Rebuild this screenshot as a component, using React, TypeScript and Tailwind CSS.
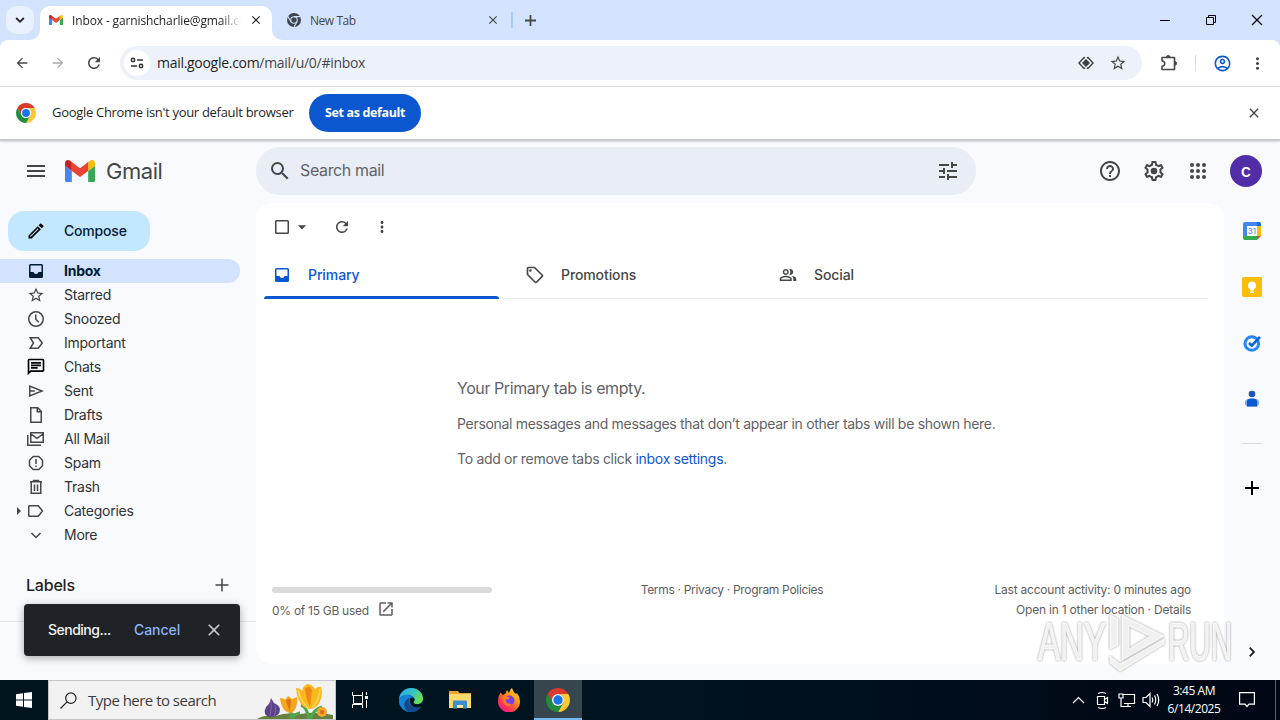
import type { ReactNode } from "react";
import {
  MdArrowBack,
  MdArrowForward,
  MdArrowDropDown,
  MdClose,
  MdHelpOutline,
  MdMoreVert,
  MdOpenInNew,
  MdOutlineAccountCircle,
  MdOutlineChat,
  MdOutlineLocalOffer,
  MdOutlineModeEdit,
  MdOutlinePeopleAlt,
  MdRefresh,
  MdSearch,
  MdStarBorder,
  MdTune,
} from "react-icons/md";

const GmailLogo = ({ className }: { className: string }) => (
  <svg viewBox="0 0 88 66" className={className}>
    <path fill="#4285f4" d="M6 66h14V32L0 17v43c0 3.3 2.7 6 6 6" />
    <path fill="#34a853" d="M68 66h14c3.3 0 6-2.7 6-6V17L68 32" />
    <path fill="#fbbc04" d="M68 6v26l20-15V9c0-7.4-8.5-11.7-14.4-7.2" />
    <path fill="#ea4335" d="M20 32V6l24 18L68 6v26L44 50" />
    <path fill="#c5221f" d="M0 9v8l20 15V6l-5.6-4.2C8.5-2.6 0 1.6 0 9" />
  </svg>
);

const ChromeLogo = ({ className }: { className: string }) => (
  <svg viewBox="0 0 24 24" className={className}>
    <path fill="#db3a2c" d="M12 6h10.39A12 12 0 0 0 1.61 6L6.8 15A6 6 0 0 1 12 6z" />
    <path fill="#fcc934" d="M22.39 6H12a6 6 0 0 1 5.2 9L12 24A12 12 0 0 0 22.39 6z" />
    <path fill="#1e8e3e" d="M1.61 6 6.8 15a6 6 0 0 0 10.4 0L12 24A12 12 0 0 1 1.61 6z" />
    <circle cx="12" cy="12" r="6" fill="#fff" />
    <circle cx="12" cy="12" r="4.7" fill="#1a73e8" />
  </svg>
);

const ChromeMono = () => (
  <svg viewBox="0 0 24 24" className="size-[14px]">
    <circle cx="12" cy="12" r="12" fill="#3c4451" />
    <circle cx="12" cy="12" r="5.6" fill="none" stroke="#d3e3fd" strokeWidth="1.8" />
    <path d="M12 6.2h11M6.8 15 1.5 5.8M17.2 15 12 24" stroke="#d3e3fd" strokeWidth="1.8" />
  </svg>
);

const Line = ({ children, w = 1.5, className = "size-5" }: { children: ReactNode; w?: number; className?: string }) => (
  <svg viewBox="0 0 20 20" fill="none" stroke="currentColor" strokeWidth={w} className={className}>
    {children}
  </svg>
);

const InboxIcon = () => (
  <svg viewBox="0 0 20 20" fill="currentColor" className="size-5">
    <path
      fillRule="evenodd"
      d="M4.5 3h11A1.5 1.5 0 0 1 17 4.5v11a1.5 1.5 0 0 1-1.5 1.5h-11A1.5 1.5 0 0 1 3 15.5v-11A1.5 1.5 0 0 1 4.5 3zm0 1.5V11h3q.6 2 2.500 2t2.500-2h3V4.500z"
    />
  </svg>
);

const folders = [
  { name: "Inbox", icon: <InboxIcon /> },
  { name: "Starred", icon: <MdStarBorder className="size-[18px]" /> },
  { name: "Snoozed", icon: <Line><circle cx="10" cy="10" r="7.250" /><path d="M9.750 5.500V10.300l3 3" /></Line> },
  { name: "Important", icon: <Line><path d="M4.250 4.750h8L16.250 10l-4 5.250h-8L7.500 10z" /></Line> },
  { name: "Chats", icon: <MdOutlineChat className="size-5 text-black" /> },
  { name: "Sent", icon: <Line><path d="M3.750 5v10L16 10zM3.750 10h5" /></Line> },
  { name: "Drafts", icon: <Line><path d="M4.750 2.750h7l3.500 3.500v11H4.750zM11.250 3v3.750H15" /></Line> },
  { name: "All Mail", icon: <Line><path d="M4.750 3.750h12.500v9.500H4.750zM5 5l6 4.250L17 5M1.750 6v10.250H15" /></Line> },
  { name: "Spam", icon: <Line><path d="M7.200 3.500h5.600l3.700 3.700v5.600l-3.700 3.700H7.200l-3.700-3.700V7.200zM10 6v5M10 12.500V14" /></Line> },
  { name: "Trash", icon: <Line><path d="M4 4.750h12M7.500 4V3.500h5V4M5.250 5v11.250h9.500V5M8.500 7.500v6.500M11.500 7.500v6.500" /></Line> },
  { name: "Categories", icon: <Line><path d="M3.500 4.750h8.750L16.500 10l-4.250 5.250H3.500q-.75 0-.75-.75v-9q0-.75.75-.75z" /></Line> },
  { name: "More", icon: <Line><path d="m5.500 8 4.500 4.500L14.500 8" /></Line> },
];

function TabStrip() {
  return (
    <div className="flex h-10 bg-[#d3e3fd] font-['Open_Sans',sans-serif] text-[12px] text-[#1f1f1f]">
      <div className="mt-[6px] ml-[6px] flex size-7 items-center justify-center rounded-[10px] bg-[#e9f1fe]">
        <svg viewBox="0 0 10 10" className="size-[10px]" fill="none" stroke="#1f1f1f" strokeWidth="1.800">
          <path d="m1.200 3 3.800 3.800L8.800 3" />
        </svg>
      </div>
      <div className="relative mt-[6px] ml-[6px] flex h-[34px] w-[232px] items-center rounded-t-[10px] bg-white pb-[6px] pl-[9px]">
        <svg viewBox="0 0 10 10" className="absolute bottom-0 -left-[10px] size-[10px]">
          <path d="M10 0v10H0A10 10 0 0 0 10 0" fill="#fff" />
        </svg>
        <svg viewBox="0 0 10 10" className="absolute -right-[10px] bottom-0 size-[10px]">
          <path d="M0 0v10h10A10 10 0 0 1 0 0" fill="#fff" />
        </svg>
        <GmailLogo className="w-[14px]" />
        <div className="ml-[9px] w-[169px] overflow-hidden pt-px whitespace-nowrap [mask-image:linear-gradient(90deg,#000_88%,transparent)] tracking-[-0.130px]">
          Inbox - garnishcharlie@gmail.com
        </div>
        <MdClose className="ml-[8px] size-[14px]" />
      </div>
      <div className="flex w-[241px] items-center pl-[15px] text-[#474747]">
        <ChromeMono />
        <span className="ml-[9px] flex-1 pt-px tracking-[-0.450px]">New Tab</span>
        <MdClose className="mr-[11px] size-[14px]" />
        <span className="h-4 w-[2px] rounded bg-[#a8c7fa]" />
      </div>
      <svg viewBox="0 0 10 10" className="mt-[15px] ml-[12px] size-[11px]" stroke="#474747" strokeWidth="1.600">
        <path d="M5 0v10M0 5h10" />
      </svg>
      <svg viewBox="0 0 110 12" className="mt-[14px] mr-[10px] ml-auto h-3 w-[110px]" fill="none" stroke="#000">
        <path d="M0 6.500h10M46.500 3.500h7v7h-7zM48.500 3.500v-2h7v7h-2" />
        <path d="m92 1 10 10M102 1 92 11" strokeWidth="1.200" />
      </svg>
    </div>
  );
}

function Toolbar() {
  return (
    <div className="bg-[#d3e3fd]">
      <div className="flex h-[47px] items-center rounded-t-[8px] border-b border-[#dfe1e5] bg-white font-['Open_Sans',sans-serif] text-[#474747]">
        <MdArrowBack className="ml-[14px] size-4" />
        <MdArrowForward className="ml-5 size-4 text-[#ababab]" />
        <MdRefresh className="ml-[19px] size-[18px]" />
        <div className="ml-[17px] flex h-[34px] w-[1022px] items-center rounded-full bg-[#edf1fa] pl-1">
          <span className="flex size-[26px] items-center justify-center rounded-full bg-white">
            <svg viewBox="0 0 14 12" className="h-3 w-[14px]" fill="none" stroke="#333" strokeWidth="1.500">
              <circle cx="3" cy="3" r="1.700" />
              <path d="M7 3h6M1 9h6" />
              <circle cx="11" cy="9" r="1.700" />
            </svg>
          </span>
          <span className="ml-[7px] flex-1 pb-px text-[14px] tracking-[-0.290px]">
            <span className="text-[#1f1f1f]">mail.google.com</span>/mail/u/0/#inbox
          </span>
          <svg viewBox="0 0 16 14" className="mr-[15px] h-[14px] w-4" fill="none" stroke="#3c4043" strokeWidth="1.400">
            <path d="M7 2 6 1.500 1 7l5 5.500L7 12M9 2l1-.5L15 7l-5 5.500L9 12" />
            <path d="M8 4 11 7 8 10 5 7z" fill="#3c4043" />
          </svg>
          <MdStarBorder className="mr-[15px] size-[18px]" />
        </div>
        <svg viewBox="0 0 18 18" className="ml-[18px] size-[18px]" fill="none" stroke="#474747" strokeWidth="1.600">
          <path d="M2 3.500h12.500V15.500H2v-3.200c2-.2 2.700-1.500 2.700-2.800S4 7 2 6.700z" strokeLinejoin="round" />
          <path d="M6.500 3.200a1.800 1.800 0 0 1 3.600 0zM14.800 7.600a1.800 1.800 0 0 1 0 3.600z" fill="#474747" strokeWidth="1" />
        </svg>
        <span className="ml-[17px] h-4 w-px bg-[#d3dbe8]" />
        <MdOutlineAccountCircle className="ml-[17px] size-[19px] text-[#0b57d0]" />
        <MdMoreVert className="ml-[16px] size-[19px]" />
      </div>
    </div>
  );
}

function InfoBar() {
  return (
    <div className="relative z-10 flex h-[54px] items-center border-b-2 border-[#c9cbcc] bg-white font-['Open_Sans',sans-serif] text-[13px] text-[#1f1f1f] shadow-[0_1px_2px_#0002]">
      <ChromeLogo className="ml-4 size-5" />
      <span className="ml-4 w-[257px] tracking-[-0.300px] whitespace-nowrap">Google Chrome isn't your default browser</span>
      <button className="h-[38px] w-[112px] rounded-full bg-[#0b57d0] pt-px text-[12.500px] font-bold tracking-[-0.350px] text-white">
        Set as default
      </button>
      <MdClose className="mr-[18px] ml-auto size-4 text-[#474747]" />
    </div>
  );
}

function Header() {
  return (
    <header className="mb-[2px] flex h-[60px] items-center text-[#444746]">
      <svg viewBox="0 0 18 12" className="ml-[27px] h-3 w-[18px]" stroke="currentColor" strokeWidth="2">
        <path d="M0 1h18M0 6h18M0 11h18" />
      </svg>
      <GmailLogo className="ml-5 w-[30px]" />
      <span className="ml-[11px] w-[150px] text-[22px] tracking-[-0.450px]">Gmail</span>
      <div className="flex h-12 w-[720px] items-center rounded-full bg-[#e9eef6] pr-4 pl-3">
        <MdSearch className="size-6" />
        <span className="ml-2 flex-1 pb-[2px] text-[16px] tracking-[-0.360px] text-[#5f6368]">Search mail</span>
        <MdTune className="size-6" />
      </div>
      <MdHelpOutline className="ml-[122px] size-6" />
      <svg viewBox="0 0 24 24" className="ml-5 size-6" fill="currentColor">
        <path d="M19.430 12.980c.04-.32.07-.64.07-.98 0-.34-.03-.66-.07-.98l2.110-1.650c.19-.15.24-.42.12-.64l-2-3.460a.5.5 0 0 0-.61-.22l-2.490 1c-.52-.4-1.080-.73-1.690-.98l-.38-2.650A.488.488 0 0 0 14 2h-4c-.25 0-.46.18-.49.42l-.38 2.650c-.61.25-1.170.59-1.690.98l-2.490-1a.566.566 0 0 0-.18-.03c-.17 0-.34.09-.43.25l-2 3.460c-.13.22-.07.49.12.64l2.110 1.650c-.04.32-.07.65-.07.98s.03.66.07.98l-2.110 1.650c-.19.15-.24.42-.12.64l2 3.460a.5.5 0 0 0 .61.22l2.490-1c.52.4 1.080.73 1.690.98l.38 2.650c.03.24.24.42.49.42h4c.25 0 .46-.18.49-.42l.38-2.650c.61-.25 1.170-.59 1.690-.98l2.490 1c.06.02.12.03.18.03.17 0 .34-.09.43-.25l2-3.460c.12-.22.07-.49-.12-.64l-2.110-1.650zm-1.980-1.710c.04.31.05.52.05.73 0 .21-.02.43-.05.73l-.14 1.130.89.7 1.080.84-.7 1.210-1.270-.51-1.040-.42-.9.68c-.43.32-.84.56-1.250.73l-1.060.43-.16 1.130-.2 1.350h-1.400l-.19-1.350-.16-1.130-1.060-.43c-.43-.18-.83-.41-1.230-.71l-.91-.7-1.060.43-1.270.51-.7-1.210 1.080-.84.89-.7-.14-1.130c-.03-.31-.05-.54-.05-.74s.02-.43.05-.73l.14-1.130-.89-.7-1.080-.84.7-1.210 1.270.51 1.040.42.9-.68c.43-.32.84-.56 1.250-.73l1.060-.43.16-1.130.2-1.350h1.390l.19 1.350.16 1.130 1.060.43c.43.18.83.41 1.230.71l.91.7 1.060-.43 1.270-.51.7 1.210-1.070.85-.89.7.14 1.130z" />
        <circle cx="12" cy="12" r="3.300" />
      </svg>
      <svg viewBox="0 0 24 24" className="ml-5 size-6" fill="currentColor">
        {[6, 12, 18].map((y) => [6, 12, 18].map((x) => <circle key={`${x}-${y}`} cx={x} cy={y} r="2" />))}
      </svg>
      <span className="ml-5 flex size-8 items-center justify-center rounded-full bg-[#512da8] pb-px text-[18px] leading-none font-medium text-white">
        c
      </span>
    </header>
  );
}

function Sidebar() {
  return (
    <aside className="relative w-64 text-[14px] text-[#303233]">
      <button className="mt-2 ml-2 flex h-10 w-[142px] items-center rounded-[16px] bg-[#c2e7ff] pl-[18px] font-medium text-[#001d35]">
        <MdOutlineModeEdit className="size-5 text-black" />
        <span className="ml-[18px] pb-[2px] tracking-[-0.180px]">Compose</span>
      </button>
      <nav className="mt-2 w-60">
        {folders.map(({ name, icon }) => (
          <div
            key={name}
            className={`flex h-6 items-center rounded-r-full ${name === "Inbox" ? "bg-[#d3e3fd] font-bold text-[#001d35]" : "text-[#444746]"}`}
          >
            <span className="flex w-[26px] justify-end">
              {name === "Categories" && (
                <svg viewBox="0 0 4 8" className="mr-[5px] h-2 w-1"><path d="M0 0l4 4-4 4z" fill="#444746" /></svg>
              )}
            </span>
            <span className="flex w-5 justify-center">{icon}</span>
            <span className={`ml-[18px] pb-[2px] tracking-[-0.250px] ${name === "Inbox" ? "" : "text-[#303233]"}`}>{name}</span>
          </div>
        ))}
      </nav>
      <div className="mt-[27px] flex h-[22px] items-center justify-between pr-[27px] pl-[26px] text-[16px] font-medium text-[#1f1f1f]">
        <span className="pb-px tracking-[-0.200px]">Labels</span>
        <svg viewBox="0 0 14 14" className="size-[14px]" stroke="#444746" strokeWidth="1.500">
          <path d="M7 .5v13M.5 7h13" />
        </svg>
      </div>
      <div className="mt-[25px] h-px bg-[#e3e7ec]" />
      <div className="absolute top-[401px] left-6 flex h-[52px] w-[216px] items-center rounded bg-[#1f2226] pl-6 font-medium text-[#f2f2f2] shadow-[0_2px_8px_#0005]">
        <span className="w-[86px] pb-[2px] tracking-[-0.500px]">Sending...</span>
        <span className="w-[70px] pb-[2px] tracking-[-0.050px] text-[#8ab4f8]">Cancel</span>
        <MdClose className="size-5 text-[#c4c7c5]" />
      </div>
    </aside>
  );
}

function Main() {
  return (
    <main className="flex h-[461px] w-[968px] flex-col rounded-2xl bg-white text-[#444746]">
      <div className="flex h-12 items-center pl-4">
        <Line>
          <rect x="3.750" y="3.750" width="12.500" height="12.500" rx=".8" />
        </Line>
        <MdArrowDropDown className="size-5" />
        <MdRefresh className="ml-[21px] size-[18px]" />
        <MdMoreVert className="ml-[22px] size-[18px]" />
      </div>
      <div className="mr-4 ml-2 flex h-[48px] border-b border-[#eceff1] text-[14px] font-medium tracking-[-0.100px]">
        <div className="relative flex w-[235px] items-center pl-2 text-[#0b57d0]">
          <InboxIcon />
          <span className="ml-4">Primary</span>
          <span className="absolute inset-x-0 -bottom-px h-[3px] rounded-t-[3px] bg-[#0b57d0]" />
        </div>
        <div className="flex w-[253px] items-center pl-[26px]">
          <MdOutlineLocalOffer className="size-5" />
          <span className="ml-4">Promotions</span>
        </div>
        <div className="flex items-center pl-[27px]">
          <MdOutlinePeopleAlt className="size-[18px]" />
          <span className="ml-[17px]">Social</span>
        </div>
      </div>
      <div className="mt-[77px] ml-[201px] text-[#5f6368]">
        <p className="text-[16px] leading-6 tracking-[-0.430px]">Your Primary tab is empty.</p>
        <p className="mt-[14px] text-[14px] leading-5 tracking-[-0.305px] whitespace-nowrap">
          Personal messages and messages that don’t appear in other tabs will be shown here.
        </p>
        <p className="mt-[15px] text-[14px] leading-5 tracking-[-0.300px]">
          To add or remove tabs click <span className="text-[#0b57d0]">inbox settings</span>.
        </p>
      </div>
      <footer className="mt-[111px] flex px-4 text-[12px] leading-5 text-[#5e5e5e]">
        <div className="w-[220px]">
          <div className="mt-[7px] h-[6px] rounded-[3px] bg-[#dadada]" />
          <div className="mt-2 flex items-center tracking-[-0.280px]">
            0% of 15 GB used
            <MdOpenInNew className="-mt-1 ml-2 size-[18px]" />
          </div>
        </div>
        <div className="w-[480px] text-center tracking-[-0.310px]">Terms · Privacy · Program Policies</div>
        <div className="w-[219px] text-right tracking-[-0.220px] whitespace-nowrap">
          Last account activity: 0 minutes ago
          <br />
          Open in 1 other location · Details
        </div>
      </footer>
    </main>
  );
}

function SidePanel() {
  return (
    <aside className="flex w-14 flex-col items-center">
      <svg viewBox="0 0 20 20" className="mt-[18px] size-5">
        <path d="M3 1h12v4H5v10H1V3q0-2 2-2" fill="#4285f4" />
        <path d="M15 1h2q2 0 2 2v2h-4z" fill="#1967d2" />
        <path d="M15 5h4v10h-4z" fill="#fbbc04" />
        <path d="M1 15h14v4H3q-2 0-2-2z" fill="#34a853" />
        <path d="M15 15h4l-4 4z" fill="#ea4335" />
        <path d="M5 5h10v10H5z" fill="#fff" />
        <text x="9.900" y="13" fontSize="8" textAnchor="middle" fill="#4285f4">31</text>
      </svg>
      <svg viewBox="0 0 20 20" className="mt-9 size-5">
        <rect width="20" height="20" rx="2" fill="#fbbc04" />
        <path d="M10 4.500a4 4 0 0 1 2 7.500v1.500H8V12a4 4 0 0 1 2-7.500M8 14.500h4V16H8z" fill="#fff" />
      </svg>
      <svg viewBox="0 0 20 20" className="mt-9 size-5" fill="none">
        <circle cx="9.800" cy="10.500" r="6.800" stroke="#2684fc" strokeWidth="3" />
        <path d="m7 10 2.700 2.700 8.300-8.700" stroke="#0b66da" strokeWidth="2.600" />
      </svg>
      <svg viewBox="0 0 20 20" className="mt-9 size-5">
        <rect x="3" y="10" width="14" height="7.500" rx="3.500" fill="#7baaf7" />
        <path d="M5 17.500V13q0-3.500 3.500-3.500h3Q15 9.500 15 13v4.500z" fill="#0b57d0" />
        <circle cx="10" cy="5" r="3.300" fill="#1a56bd" />
      </svg>
      <div className="mt-[34px] h-px w-5 bg-[#dadce0]" />
      <svg viewBox="0 0 14 14" className="mt-[37px] size-[14px]" stroke="#000" strokeWidth="2">
        <path d="M7 0v14M0 7h14" />
      </svg>
      <svg viewBox="0 0 6 10" className="mt-[152px] h-[10px] w-[6px]" fill="none" stroke="#1f1f1f" strokeWidth="1.800">
        <path d="m.7.700 4.300 4.300L.7 9.300" />
      </svg>
    </aside>
  );
}

function Flowers() {
  return (
    <svg viewBox="0 0 80 38" className="ml-auto h-[38px] w-20">
      <path d="M2 38q8-5 18-3 12-4 26-2 14-3 32 1v4z" fill="#66813f" />
      <path d="M36 38q1-8-3-13M37 38q4-6 8-6M54 38q-2-12-8-14M55 38q4-10 12-12" stroke="#4fa64b" strokeWidth="3" fill="none" />
      <path d="M16 17q-1 6-5 9-4 8 4 10 10 0 10-8-1-4-6-6z" fill="#5c4387" />
      <path d="M16 20q1 8-1 15M20 24q2 6-1 11" stroke="#8366ad" fill="none" />
      <path d="M25 17q4 0 5 2l3-4 4 3 5-2q1 13-6 16-9 0-11-15z" fill="#f6a51c" />
      <path d="M31 20q3-5 5 0l-1 11z" fill="#dd7413" />
      <path d="M41 7q4 0 6 3 1-6 6-7 5 1 7 5 3-3 6-2 2 7-1 14-3 8-10 8Q43 27 41 7z" fill="#fbb81f" />
      <path d="M50 8q4-5 7 1l-2 17q-4-8-5-18" fill="#ee8817" />
      <path d="M43 9q3 12 10 18M65 8q-1 12-8 19" stroke="#ffd75a" strokeWidth="1.500" fill="none" />
      <circle cx="67" cy="31" r="5" fill="#f3a72c" />
      <circle cx="67" cy="31" r="2" fill="#d9651c" />
    </svg>
  );
}

function Taskbar() {
  return (
    <div className="flex h-10 bg-linear-to-r from-[#00151e] via-[#001420] to-[#000714] font-['Open_Sans',sans-serif] text-[12px] text-white">
      <div className="flex w-12 items-center justify-center">
        <svg viewBox="0 0 16 16" className="size-4" fill="#fff">
          <path d="M0 2.300 7 1.300v6.200H0zM8 1.100 16 0v7.500H8zM0 8.500h7v6.200l-7-1zM8 8.500h8V16l-8-1.100z" />
        </svg>
      </div>
      <div className="flex w-72 items-center border border-[#c6c6c6] bg-[#f2f2f2] text-[15px] text-[#3b3b3b]">
        <svg viewBox="0 0 18 18" className="ml-[11px] size-[17px]" fill="none" stroke="#222" strokeWidth="1.300">
          <circle cx="11.500" cy="6.500" r="5.500" />
          <path d="m7.500 10.500-7 7" />
        </svg>
        <span className="ml-[11px] tracking-[-0.520px]">Type here to search</span>
        <Flowers />
      </div>
      <div className="flex w-12 items-center justify-center">
        <svg viewBox="0 0 16 16" className="size-4" fill="none" stroke="#fff">
          <path d="M.5 0v3.500h10V0M1.500 3.500v8h9v-8M.5 16v-3.500h10V16M14.500 0v3M14.500 8v8" />
          <path d="M13 4h3v3h-3z" fill="#fff" stroke="none" />
        </svg>
      </div>
      <div className="flex w-[54px] items-center justify-center">
        <svg viewBox="0 0 24 24" className="size-6">
          <defs>
            <linearGradient id="edgeTop" x1="0" y1="0" x2="1" y2=".5">
              <stop offset="0" stopColor="#2aa7e8" />
              <stop offset=".55" stopColor="#35c1c8" />
              <stop offset="1" stopColor="#6bdc55" />
            </linearGradient>
          </defs>
          <circle cx="12" cy="12" r="12" fill="#0c6fc4" />
          <path d="M0 11C1 4 6 0 12 0c7 0 12 5 12 10.500 0 3.500-2.500 5.700-5.500 5.700-2.500 0-4-1-4-2 0-.8 1-1 1-3C15.500 8.500 12 6.800 8.500 6.800 4 6.800 1 9 0 11" fill="url(#edgeTop)" />
          <path d="M8.500 7C4 7 0 10 0 13c0 6 5 11 12 11-5-1-7-5-6-9 .6-3 3-4.500 5.500-5.500A9 9 0 0 0 8.500 7" fill="#1583d6" />
          <path d="M10.500 10C8 14 12 20 18 19.500c2 0 3.500-.8 4.300-1.200C20 22 16 24 12 24c-5 0-8-5-6.500-9 .8-2.500 3-4.500 5-5" fill="#114a8b" />
          <path d="M14.500 14.200c0 1 1.500 2 4 2 2 0 4-1 5-3l.5 3-2 2.300c-1 .6-2.500 1-4 1-5 .3-8-4.500-7-8.500 1-1.500 3.500-1.800 4.500 0 .5 1.500-1 2.300-1 3.200" fill="#00151e" />
        </svg>
      </div>
      <div className="flex w-11 items-center justify-center">
        <svg viewBox="0 0 22 20" className="h-5 w-[22px]">
          <path d="M0 1h9l1.500 2H22v15H0z" fill="#e8a33d" />
          <path d="M0 4h22v14H0z" fill="#ffda6b" />
          <path d="M4 18.500v-7q0-1 1-1h12q1 0 1 1v7h-4V15H8v3.500z" fill="#3b8fd0" />
          <path d="M8 15h6v2H8z" fill="#fff0a8" />
        </svg>
      </div>
      <div className="flex w-[52px] items-center justify-center pl-[2px]">
        <svg viewBox="0 0 24 24" className="size-6">
          <defs>
            <linearGradient id="fox" x1="1" y1="0" x2=".2" y2="1">
              <stop offset="0" stopColor="#fff04d" />
              <stop offset=".4" stopColor="#ff980e" />
              <stop offset=".75" stopColor="#ff3750" />
              <stop offset="1" stopColor="#e31587" />
            </linearGradient>
          </defs>
          <path d="M3.500 4.500 6 7l3-2q0-2 1-3l2 3q1-4 3-5 1 4 4 6l1-1q3 4 3 8.500A11 11 0 1 1 1 13.500Q1 8 3.500 4.500" fill="url(#fox)" />
          <circle cx="12.500" cy="12.500" r="5" fill="#7542e5" />
          <path d="M5 9q5-2 8 1-2 2-4.500 1.500Q9 16 15 16q-4 4-8 0-2-3-2-7" fill="#ff7a2a" />
        </svg>
      </div>
      <div className="flex w-12 items-center justify-center border-b-2 border-[#76b9ed] bg-[#36454e] pt-[2px]">
        <ChromeLogo className="size-6" />
      </div>
      <svg viewBox="0 0 90 20" className="mt-[10px] ml-auto h-5 w-[90px]" fill="none" stroke="#fff" strokeWidth="1.200">
        <path d="m3 13 5.500-5.500L14 13" />
        <path d="M27.500 6.500h7v8h-7zM34.500 9.500l3-2v6l-3-2M28 3.500q4-2 8 0M28 17.500q4 2 8 0" />
        <path d="M52 4.500h12.500v9H54M49 4h4v4h-4zM51 8v8.500h10M58 13.500v3" />
        <path d="M73 7.500h3l4-4v13l-4-4h-3zM82 7.500q1.500 2.500 0 5M84.500 5.500q2.500 4.500 0 9M87 4q3.500 6 0 12" />
      </svg>
      <div className="w-[68px] pt-[2px] text-center leading-[18px] tracking-[-0.450px]">
        3:45 AM
        <br />
        6/14/2025
      </div>
      <svg viewBox="0 0 16 16" className="mt-[12px] ml-[11px] size-4" fill="none" stroke="#fff" strokeWidth="1.200">
        <path d="M.6.600h14.800v11.500H10L8 14.500l-2-2.400H.6z" />
      </svg>
      <div className="mr-1 ml-[20px] w-px bg-[#5d646d]" />
    </div>
  );
}

const Watermark = () => (
  <svg
    viewBox="0 0 200 62"
    className="pointer-events-none absolute top-[611px] left-[1036px] h-[62px] w-[200px] overflow-visible font-['Liberation_Sans',sans-serif] [filter:drop-shadow(0_0_1px_#0007)]"
    fill="#fff"
    fillOpacity=".85"
    stroke="#fff"
    strokeOpacity=".8"
  >
    <text x="2" y="49" fontSize="53" textLength="68" lengthAdjust="spacingAndGlyphs">ANY</text>
    <text x="132" y="49" fontSize="53" textLength="64" lengthAdjust="spacingAndGlyphs">RUN</text>
    <path d="M74 4v34l8-4V8zM86 4v45l42-24zM93 15l21 10-21 13z" fillRule="evenodd" />
    <path d="M74 45v7l10 8 44-27v-5L84 53z" />
  </svg>
);

export default function App() {
  return (
    <div className="relative flex h-[720px] w-[1280px] flex-col overflow-hidden">
      <TabStrip />
      <Toolbar />
      <InfoBar />
      <div className="flex flex-1 flex-col bg-[#f8fafd] font-[Inter,sans-serif]">
        <Header />
        <div className="flex flex-1">
          <Sidebar />
          <Main />
          <SidePanel />
        </div>
      </div>
      <Taskbar />
      <Watermark />
    </div>
  );
}
